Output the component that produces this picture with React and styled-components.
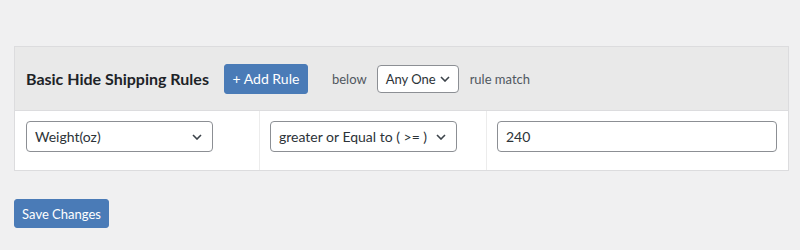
import React from "react";
import styled, { createGlobalStyle } from "styled-components";

const Global = createGlobalStyle`
  html, body { margin: 0; padding: 0; background: #f0f0f1; }
  body { font-family: Lato, "Open Sans", sans-serif; color: #3c434a; font-size: 14px; }
  * { box-sizing: border-box; }
`;

const Page = styled.div`
  padding: 46px 11px 0 14px;
  width: 800px;
  height: 250px;
`;

const Panel = styled.div`
  background: #fff;
  border: 1px solid #dcdcde;
`;

const Header = styled.div`
  display: flex;
  align-items: center;
  height: 64px;
  padding: 0 11px;
  background: #e9e9e9;
  border-bottom: 1px solid #dcdcde;
`;

const Title = styled.h2`
  margin: 0 15px 0 0;
  font-size: 16px;
  font-weight: 700;
  color: #1d2327;
  white-space: nowrap;
  flex-shrink: 0;
`;

const Button = styled.button`
  font-family: inherit;
  font-size: ${(p) => p.$fs}px;
  color: #fff;
  background: #4a7bb7;
  border: 1px solid #4a7bb7;
  border-radius: 3px;
  height: ${(p) => p.$h}px;
  width: ${(p) => p.$w}px;
  padding: 0;
  cursor: pointer;
  white-space: nowrap;
  flex-shrink: 0;
`;

const Label = styled.span`
  font-size: 13px;
  color: #50575e;
  margin: 0 ${(p) => p.$mr}px 0 ${(p) => p.$ml}px;
`;

const SelectBox = styled.div`
  display: flex;
  align-items: center;
  justify-content: space-between;
  gap: 4px;
  flex-shrink: 0;
  width: ${(p) => p.$w}px;
  height: ${(p) => p.$h}px;
  padding: 0 ${(p) => p.$pr}px 0 8px;
  background: #fff;
  border: 1px solid #8c8f94;
  border-radius: 4px;
  font-size: ${(p) => p.$fs}px;
  color: #2c3338;
  white-space: nowrap;
`;

const Row = styled.div`
  display: grid;
  grid-template-columns: 244px 227px 1fr;
`;

const Cell = styled.div`
  padding: 10px 11px 18px;
  border-left: ${(p) => (p.$first ? "none" : "1px solid #ececec")};
  padding-left: ${(p) => (p.$first ? 11 : 10)}px;
`;

const Input = styled.div`
  height: 31px;
  border: 1px solid #8c8f94;
  border-radius: 4px;
  padding: 0 8px;
  display: flex;
  align-items: center;
  font-size: 14px;
  color: #2c3338;
`;

const Footer = styled.div`
  padding-top: 28px;
`;

const Chevron = () => (
  <svg width="10" height="6" viewBox="0 0 10 6" fill="none">
    <path d="M1 1l4 4 4-4" stroke="#3c434a" strokeWidth="1.6" />
  </svg>
);

const Select = ({ children, w, h, pr, fs = 14 }) => (
  <SelectBox $w={w} $h={h} $pr={pr} $fs={fs}>
    <span>{children}</span>
    <Chevron />
  </SelectBox>
);

export default function App() {
  return (
    <>
      <Global />
      <Page>
        <Panel>
          <Header>
            <Title>Basic Hide Shipping Rules</Title>
            <Button $h={30} $w={84} $fs={14}>+ Add Rule</Button>
            <Label $ml={24} $mr={10}>below</Label>
            <Select w={82} h={28} pr={8} fs={13}>Any One</Select>
            <Label $ml={11} $mr={0}>rule match</Label>
          </Header>
          <Row>
            <Cell $first>
              <Select w={187} h={31} pr={10}>Weight(oz)</Select>
            </Cell>
            <Cell>
              <Select w={187} h={31} pr={10}>greater or Equal to ( &gt;= )</Select>
            </Cell>
            <Cell>
              <Input>240</Input>
            </Cell>
          </Row>
        </Panel>
        <Footer>
          <Button $h={29} $w={95} $fs={13}>Save Changes</Button>
        </Footer>
      </Page>
    </>
  );
}
